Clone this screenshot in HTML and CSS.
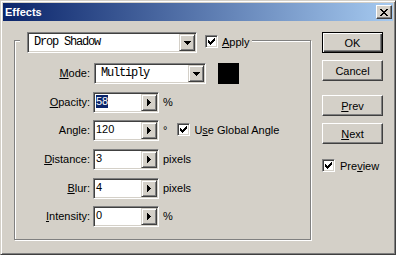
FILE: index.html
```html
<!DOCTYPE html>
<html lang="en">
<head>
    <meta charset="UTF-8">
    <title>Effects</title>
    <link rel="stylesheet" href="styles.css">
</head>
<body>

    <div class="window">
        <!-- Title bar -->
        <div class="titlebar">
            <span class="title">Effects</span>
            <span class="close">
                <svg width="8" height="7" viewBox="0 0 8 7"><path d="M0 0h2v1H0z M6 0h2v1H6z M1 1h2v1H1z M5 1h2v1H5z M2 2h4v1H2z M3 3h2v1H3z M2 4h4v1H2z M1 5h2v1H1z M5 5h2v1H5z M0 6h2v1H0z M6 6h2v1H6z"/></svg>
            </span>
        </div>

        <div class="client">
            <!-- Effect settings -->
            <div class="group">
                <div class="group-head">
                    <div class="combo combo-effect">
                        <span class="combo-text">Drop Shadow</span>
                        <span class="drop-btn"><svg width="7" height="4" viewBox="0 0 7 4"><path d="M0 0h7v1h-1v1h-1v1h-1v1h-1v-1h-1v-1h-1v-1h-1z"/></svg></span>
                    </div>
                    <label class="check apply">
                        <span class="box"><svg width="9" height="9" viewBox="0 0 9 9"><path d="M1 3h1v3H1z M2 4h1v3H2z M3 5h1v3H3z M4 4h1v3H4z M5 3h1v3H5z M6 2h1v3H6z M7 1h1v3H7z"/></svg></span>
                        <span><u>A</u>pply</span>
                    </label>
                </div>

                <div class="rows">
                    <div class="row">
                        <span class="label"><u>M</u>ode:</span>
                        <div class="combo combo-mode">
                            <span class="combo-text">Multiply</span>
                            <span class="drop-btn"><svg width="7" height="4" viewBox="0 0 7 4"><path d="M0 0h7v1h-1v1h-1v1h-1v1h-1v-1h-1v-1h-1v-1h-1z"/></svg></span>
                        </div>
                        <span class="swatch"></span>
                    </div>
                    <div class="row">
                        <span class="label"><u>O</u>pacity:</span>
                        <div class="spin">
                            <span class="spin-value"><span class="selected">58</span></span>
                            <span class="spin-btn"><svg width="4" height="7" viewBox="0 0 4 7"><path d="M0 0h1v1h1v1h1v1h1v1h-1v1h-1v1h-1v1h-1z"/></svg></span>
                        </div>
                        <span class="unit">%</span>
                    </div>
                    <div class="row">
                        <span class="label">Angle:</span>
                        <div class="spin">
                            <span class="spin-value">120</span>
                            <span class="spin-btn"><svg width="4" height="7" viewBox="0 0 4 7"><path d="M0 0h1v1h1v1h1v1h1v1h-1v1h-1v1h-1v1h-1z"/></svg></span>
                        </div>
                        <span class="unit">°</span>
                        <label class="check global">
                            <span class="box"><svg width="9" height="9" viewBox="0 0 9 9"><path d="M1 3h1v3H1z M2 4h1v3H2z M3 5h1v3H3z M4 4h1v3H4z M5 3h1v3H5z M6 2h1v3H6z M7 1h1v3H7z"/></svg></span>
                            <span>U<u>s</u>e Global Angle</span>
                        </label>
                    </div>
                    <div class="row">
                        <span class="label"><u>D</u>istance:</span>
                        <div class="spin">
                            <span class="spin-value">3</span>
                            <span class="spin-btn"><svg width="4" height="7" viewBox="0 0 4 7"><path d="M0 0h1v1h1v1h1v1h1v1h-1v1h-1v1h-1v1h-1z"/></svg></span>
                        </div>
                        <span class="unit">pixels</span>
                    </div>
                    <div class="row">
                        <span class="label"><u>B</u>lur:</span>
                        <div class="spin">
                            <span class="spin-value">4</span>
                            <span class="spin-btn"><svg width="4" height="7" viewBox="0 0 4 7"><path d="M0 0h1v1h1v1h1v1h1v1h-1v1h-1v1h-1v1h-1z"/></svg></span>
                        </div>
                        <span class="unit">pixels</span>
                    </div>
                    <div class="row">
                        <span class="label"><u>I</u>ntensity:</span>
                        <div class="spin">
                            <span class="spin-value">0</span>
                            <span class="spin-btn"><svg width="4" height="7" viewBox="0 0 4 7"><path d="M0 0h1v1h1v1h1v1h1v1h-1v1h-1v1h-1v1h-1z"/></svg></span>
                        </div>
                        <span class="unit">%</span>
                    </div>
                </div>
            </div>

            <!-- Dialog buttons -->
            <div class="buttons">
                <button class="btn default">OK</button>
                <button class="btn cancel">Cancel</button>
                <button class="btn prev"><u>P</u>rev</button>
                <button class="btn next"><u>N</u>ext</button>
                <label class="check preview">
                    <span class="box"><svg width="9" height="9" viewBox="0 0 9 9"><path d="M1 3h1v3H1z M2 4h1v3H2z M3 5h1v3H3z M4 4h1v3H4z M5 3h1v3H5z M6 2h1v3H6z M7 1h1v3H7z"/></svg></span>
                    <span>Pre<u>v</u>iew</span>
                </label>
            </div>
        </div>
    </div>

</body>
</html>
```

FILE: styles.css
```css
body {
    margin: 0;
    font-family: "Liberation Sans", Arial, sans-serif;
    font-size: 11px;
    color: #000;
    background-color: #d4d0c8;
}
svg {
    display: block;
    shape-rendering: crispEdges;
}
u {
    text-underline-offset: 1px;
}
.window {
    width: 396px;
    height: 255px;
    box-sizing: border-box;
    padding: 2px;
    border: 1px solid;
    border-color: #d4d0c8 #404040 #404040 #d4d0c8;
    box-shadow: inset 1px 1px 0 #fff, inset -1px -1px 0 #808080;
    background-color: #d4d0c8;
    display: flex;
    flex-direction: column;
}
.titlebar {
    height: 18px;
    display: flex;
    align-items: center;
    padding-left: 2px;
    background: linear-gradient(to right, #0a246a, #a6caf0);
}
.title {
    color: white;
    font-weight: bold;
    line-height: 18px;
}
.close {
    margin-left: auto;
    margin-right: 1px;
    width: 16px;
    height: 14px;
    box-sizing: border-box;
    display: flex;
    align-items: center;
    justify-content: center;
    background-color: #d4d0c8;
    border: 1px solid;
    border-color: #fff #404040 #404040 #fff;
    box-shadow: inset -1px -1px 0 #808080;
}
.client {
    flex-grow: 1;
    display: flex;
    padding: 0 10px 0 11px;
}

/* group box */
.group {
    margin-top: 19px;
    width: 297px;
    height: 200px;
    box-sizing: border-box;
    border: 1px solid #808080;
    box-shadow: 1px 1px 0 #fff, inset 1px 1px 0 #fff;
}
.group-head {
    display: flex;
    align-items: flex-start;
    width: fit-content;
    margin: -9px 0 0 5px;
    padding: 0 2px 0 7px;
    background-color: #d4d0c8;
}
.rows {
    margin-top: 10px;
    display: flex;
    flex-direction: column;
    gap: 7.7px;
}
.row {
    display: flex;
    align-items: flex-start;
    height: 21px;
    line-height: 21px;
}
.label {
    width: 75px;
    margin-right: 3px;
    text-align: right;
}
.unit {
    margin-left: 4px;
}

/* combo boxes */
.combo {
    display: flex;
    height: 21px;
    box-sizing: border-box;
    padding: 1px;
    border: 1px solid;
    border-color: #808080 #fff #fff #808080;
    box-shadow: inset 1px 1px 0 #404040, inset -1px -1px 0 #d4d0c8;
    background-color: white;
}
.combo-effect {
    width: 170px;
}
.combo-mode {
    width: 112px;
    margin-left: 1px;
}
.combo-text {
    flex-grow: 1;
    padding-left: 5px;
    font-family: "Liberation Mono", "Courier New", monospace;
    font-size: 12px;
    letter-spacing: -1.2px;
    line-height: 17px;
}
.drop-btn, .spin-btn {
    width: 16px;
    box-sizing: border-box;
    display: flex;
    align-items: center;
    justify-content: center;
    background-color: #d4d0c8;
    border: 1px solid;
    border-color: #d4d0c8 #404040 #404040 #d4d0c8;
    box-shadow: inset 1px 1px 0 #fff, inset -1px -1px 0 #808080;
}
.swatch {
    width: 21px;
    height: 21px;
    margin-left: 12px;
    background-color: black;
}

/* spin fields */
.spin {
    display: flex;
    width: 66px;
    height: 21px;
    box-sizing: border-box;
    padding: 1px;
    border: 1px solid;
    border-color: #808080 #fff #fff #808080;
    box-shadow: inset 1px 1px 0 #404040, inset -1px -1px 0 #d4d0c8;
    background-color: white;
}
.spin-value {
    flex-grow: 1;
    padding-left: 1px;
    line-height: 14px;
}
.selected {
    display: inline-block;
    background-color: #0a246a;
    color: white;
    line-height: 13px;
}

/* check boxes */
.check {
    display: flex;
    align-items: flex-start;
    gap: 4px;
    line-height: 21px;
}
.box {
    width: 13px;
    height: 13px;
    margin-top: 3px;
    box-sizing: border-box;
    padding: 1px;
    border: 1px solid;
    border-color: #808080 #fff #fff #808080;
    box-shadow: inset 1px 1px 0 #404040, inset -1px -1px 0 #d4d0c8;
    background-color: white;
}
.apply {
    margin-left: 8px;
}
.global {
    margin-left: 10px;
}
.preview {
    margin-top: 12px;
    gap: 5px;
}

/* buttons */
.buttons {
    display: flex;
    flex-direction: column;
    width: 61px;
    margin-left: 11px;
    padding-top: 11px;
}
.btn {
    height: 21px;
    padding: 0;
    font: inherit;
    color: black;
    background-color: #d4d0c8;
    border: 1px solid;
    border-color: #fff #404040 #404040 #fff;
    box-shadow: inset -1px -1px 0 #808080;
}
.btn.default {
    border-color: black;
    box-shadow: inset 1px 1px 0 #fff, inset -1px -1px 0 #404040, inset -2px -2px 0 #808080;
}
.cancel, .next {
    margin-top: 7px;
}
.prev {
    margin-top: 14px;
}
```
